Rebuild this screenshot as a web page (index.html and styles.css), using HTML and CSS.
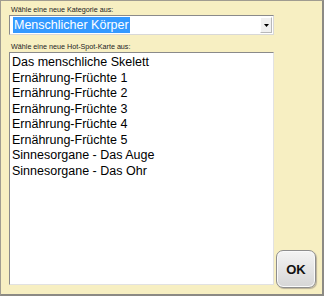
FILE: index.html
```
<!DOCTYPE html>
<html lang="de">
<head>
    <meta charset="UTF-8">
    <title>Hot-Spot-Karte wählen</title>
    <link rel="stylesheet" href="styles.css">
</head>
<body>
    <div class="dialog">
        <div class="form-col">
            <label class="field-label">Wähle eine neue Kategorie aus:</label>
            <div class="combo">
                <span class="combo-value">Menschlicher Körper</span>
                <span class="combo-arrow">
                    <svg width="5" height="3" viewBox="0 0 5 3"><path d="M0 0H5L2.5 3Z" fill="#000"/></svg>
                </span>
            </div>

            <label class="field-label list-label">Wähle eine neue Hot-Spot-Karte aus:</label>
            <ul class="listbox">
                <li>Das menschliche Skelett</li>
                <li>Ernährung-Früchte 1</li>
                <li>Ernährung-Früchte 2</li>
                <li>Ernährung-Früchte 3</li>
                <li>Ernährung-Früchte 4</li>
                <li>Ernährung-Früchte 5</li>
                <li>Sinnesorgane - Das Auge</li>
                <li>Sinnesorgane - Das Ohr</li>
            </ul>
        </div>

        <div class="button-col">
            <button class="btn-ok">OK</button>
        </div>
    </div>
</body>
</html>
```

FILE: styles.css
```
* {
    margin: 0;
    padding: 0;
    box-sizing: border-box;
}

body {
    font-family: 'Liberation Sans', Arial, sans-serif;
    background-color: #f7efc2;
    color: #000000;
    overflow: hidden;
}

.dialog {
    display: flex;
    width: 324px;
    height: 296px;
    background-color: #f7efc2;
    border: 1px solid #a09c90;
    border-right: 2px solid #8c8a84;
    border-bottom: 2px solid #8c8a84;
    padding: 5px 6px 9px 8px;
}

.form-col {
    width: 265px;
    display: flex;
    flex-direction: column;
}

.field-label {
    font-size: 7.2px;
    color: #222222;
    line-height: 8px;
    padding-left: 2px;
}

.combo {
    margin-top: 1px;
    height: 20px;
    display: flex;
    align-items: center;
    background-color: #ffffff;
    border: 1px solid #8a8a8a;
    border-right-color: #d8d8d8;
    border-bottom-color: #d8d8d8;
    padding: 1px 1px 1px 3px;
}

.combo-value {
    font-size: 12.5px;
    line-height: 16px;
    padding: 0 1px;
    background-color: #3399ff;
    color: #ffffff;
}

.combo-arrow {
    margin-left: auto;
    width: 12px;
    height: 16px;
    display: flex;
    align-items: center;
    justify-content: center;
    background-color: #f0f0f0;
    border: 1px solid #b8b8b8;
    border-left-color: #ffffff;
    border-top-color: #ffffff;
}

.list-label {
    margin-top: 8px;
}

.listbox {
    list-style: none;
    margin-top: 1px;
    flex: 1;
    background-color: #ffffff;
    border: 1px solid #8a8a8a;
    border-right-color: #e2e2e2;
    border-bottom-color: #e2e2e2;
    padding: 2px 2px;
}

.listbox li {
    font-size: 12.5px;
    line-height: 15.5px;
}

.button-col {
    flex: 1;
    display: flex;
    align-items: flex-end;
    justify-content: flex-end;
}

.btn-ok {
    width: 40px;
    height: 38px;
    margin-bottom: -3px;
    border: 1px solid #8e8e8e;
    border-radius: 7px;
    background: linear-gradient(#f4f4f4, #d6d6d6);
    box-shadow: inset 0 0 0 1px #fafafa, 1px 1px 1px #b8b09a;
    font-family: 'Liberation Sans', Arial, sans-serif;
    font-weight: bold;
    font-size: 13px;
    color: #111111;
}
```
